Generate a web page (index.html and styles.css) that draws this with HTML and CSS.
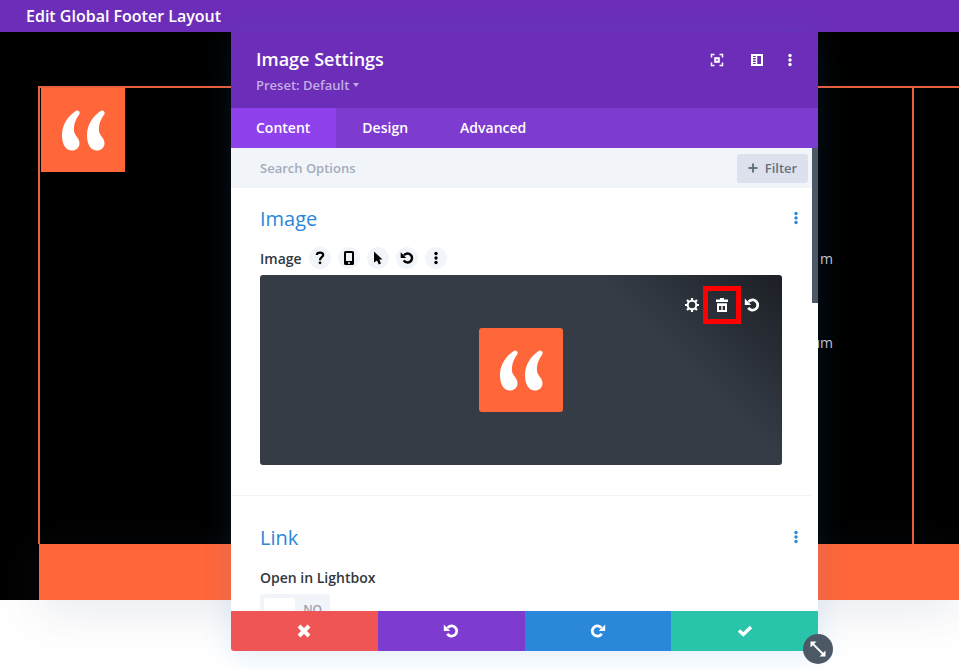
FILE: index.html
```html
<!DOCTYPE html>
<html lang="en">
<head>
  <meta charset="UTF-8" />
  <meta name="viewport" content="width=device-width, initial-scale=1.0"/>
  <title>Edit Global Footer Layout</title>
  <link rel="stylesheet" href="styles.css">
</head>

<body>
  <!-- shared icons -->
  <svg class="sprite" aria-hidden="true">
    <symbol id="quote" viewBox="0 0 84 84">
      <path fill="#fff" d="M34 23.500C36 21.500 39.500 23 38.500 26C35 31 32.500 36 33 43C33.500 48 39 50 38.500 56C38 60 35 62.500 31 62.500C25 62.500 21 57 21 47C21 37 27 28 34 23.500Z"/>
      <path fill="#fff" d="M59 23.500C61 21.500 64.500 23 63.500 26C60 31 57.500 36 58 43C58.500 48 64 50 63.500 56C63 60 60 62.500 56 62.500C50 62.500 46 57 46 47C46 37 52 28 59 23.500Z"/>
    </symbol>
    <symbol id="undo" viewBox="0 0 16 16">
      <path fill="none" stroke="currentColor" stroke-width="2.800" d="M4.600 4.900A5.100 5.100 0 1 1 4.300 10.700"/>
      <path fill="currentColor" d="M0.800 1.500V7.900H7.200Z"/>
    </symbol>
    <symbol id="dots" viewBox="0 0 16 16">
      <g fill="currentColor"><circle cx="8" cy="3.500" r="1.700"/><circle cx="8" cy="8" r="1.700"/><circle cx="8" cy="12.500" r="1.700"/></g>
    </symbol>
  </svg>

  <header class="topbar">
    <h1>Edit Global Footer Layout</h1>
  </header>

  <main class="canvas">
    <div class="footer-grid">
      <div class="col col-logo">
        <svg class="logo"><use href="#quote"/></svg>
      </div>
      <div class="col-text">
        <p>m</p>
        <p>um</p>
      </div>
      <div class="col"></div>
    </div>
    <div class="footer-band"></div>
  </main>

  <section class="modal" aria-label="Image Settings">
    <div class="modal-header">
      <div>
        <h2>Image Settings</h2>
        <button type="button" class="preset">Preset: Default <span class="caret"></span></button>
      </div>
      <div class="modal-tools">
        <button type="button" aria-label="Expand">
          <svg class="icon" viewBox="0 0 16 16"><path fill="none" stroke="currentColor" stroke-width="1.500" d="M2.500 5.500V2.500H5.500M10.500 2.500H13.500V5.500M13.500 10.500V13.500H10.500M5.500 13.500H2.500V10.500"/><rect x="6.200" y="6.200" width="3.600" height="3.600" fill="none" stroke="currentColor" stroke-width="2"/></svg>
        </button>
        <button type="button" aria-label="Snap to side">
          <svg class="icon" viewBox="0 0 16 16"><rect x="3" y="3" width="10" height="10" fill="none" stroke="currentColor" stroke-width="2"/><path fill="none" stroke="currentColor" stroke-width="1.500" d="M7.500 3V13"/><path fill="none" stroke="currentColor" stroke-width="1.200" d="M4 5.500H7M4 8H7M4 10.500H7"/></svg>
        </button>
        <button type="button" class="narrow" aria-label="More"><svg class="icon"><use href="#dots"/></svg></button>
      </div>
    </div>

    <div class="tabs">
      <button type="button" class="active">Content</button>
      <button type="button">Design</button>
      <button type="button">Advanced</button>
    </div>

    <div class="modal-body">
      <div class="options">
        <div class="search">
          <input type="text" placeholder="Search Options" aria-label="Search Options">
          <button type="button" class="filter">
            <svg viewBox="0 0 10 10"><path stroke="currentColor" stroke-width="2" d="M5 0.500V9.500M0.500 5H9.500"/></svg>
            Filter
          </button>
        </div>

        <div class="group">
          <div class="group-title">
            <h3>Image</h3>
            <button type="button" aria-label="Image options"><svg class="icon"><use href="#dots"/></svg></button>
          </div>
          <div class="field-label">
            <span>Image</span>
            <button type="button" aria-label="Help">
              <svg class="icon" viewBox="0 0 16 16"><path fill="none" stroke="currentColor" stroke-width="2.200" d="M4.800 5C5 1.800 11.200 1.800 11.200 5C11.200 7.300 8 7.200 8 10.200"/><circle cx="8" cy="12.800" r="1.400" fill="currentColor"/></svg>
            </button>
            <button type="button" aria-label="Responsive">
              <svg class="icon" viewBox="0 0 16 16"><path fill="currentColor" fill-rule="evenodd" d="M4.500 1H11.500A1.500 1.500 0 0 1 13 2.500V13.500A1.500 1.500 0 0 1 11.500 15H4.500A1.500 1.500 0 0 1 3 13.500V2.500A1.500 1.500 0 0 1 4.500 1ZM5 3V11H11V3ZM7 12.200V13.800H9V12.200Z"/></svg>
            </button>
            <button type="button" aria-label="Hover">
              <svg class="icon" viewBox="0 0 16 16"><path fill="currentColor" d="M4 1.500L12.500 9.500H9.300L11 13.500L8.800 14.500L7 10.500L4 12.500Z"/></svg>
            </button>
            <button type="button" aria-label="Reset"><svg class="icon small"><use href="#undo"/></svg></button>
            <button type="button" aria-label="More"><svg class="icon"><use href="#dots"/></svg></button>
          </div>
          <div class="preview">
            <svg class="logo"><use href="#quote"/></svg>
            <div class="preview-tools">
              <button type="button" aria-label="Settings">
                <svg class="icon" viewBox="0 0 16 16"><circle cx="8" cy="8" r="4.300" fill="none" stroke="currentColor" stroke-width="2"/><path stroke="currentColor" stroke-width="2.200" d="M8 1V3.500M8 12.500V15M1 8H3.500M12.500 8H15M3 3L4.800 4.800M11.200 11.200L13 13M13 3L11.200 4.800M4.800 11.200L3 13"/></svg>
              </button>
              <button type="button" class="marked" aria-label="Delete">
                <svg class="icon" viewBox="0 0 16 16"><path fill="currentColor" fill-rule="evenodd" d="M6 1H10V2.500H14V5H2V2.500H6ZM3 6.300H13V15H3ZM5 9V13H7.300V9ZM8.700 9V13H11V9Z"/></svg>
              </button>
              <button type="button" aria-label="Reset image"><svg class="icon"><use href="#undo"/></svg></button>
            </div>
          </div>
        </div>

        <div class="group">
          <div class="group-title">
            <h3>Link</h3>
            <button type="button" aria-label="Link options"><svg class="icon"><use href="#dots"/></svg></button>
          </div>
          <label class="field-label" for="lightbox">Open in Lightbox</label>
          <div class="toggle">
            <input type="checkbox" id="lightbox">
            <span>NO</span>
          </div>
        </div>
      </div>
      <div class="scrollbar"><div class="thumb"></div></div>
    </div>

    <div class="actions">
      <button type="button" class="discard" aria-label="Discard">
        <svg class="icon" viewBox="0 0 16 16"><path stroke="currentColor" stroke-width="4" d="M3 3L13 13M13 3L3 13"/></svg>
      </button>
      <button type="button" class="undo" aria-label="Undo"><svg class="icon"><use href="#undo"/></svg></button>
      <button type="button" class="redo" aria-label="Redo"><svg class="icon flip"><use href="#undo"/></svg></button>
      <button type="button" class="save" aria-label="Save">
        <svg class="icon" viewBox="0 0 16 16"><path fill="none" stroke="currentColor" stroke-width="3.400" d="M2 7.500L6.300 11.500L14 4"/></svg>
      </button>
    </div>

    <button type="button" class="resize" aria-label="Resize">
      <svg class="icon" viewBox="0 0 16 16"><path stroke="currentColor" stroke-width="1.800" d="M3 3L13 13"/><path fill="currentColor" d="M0.500 0.500H6.500L0.500 6.500ZM15.500 15.500H9.500L15.500 9.500Z"/></svg>
    </button>
  </section>
</body>
</html>
```

FILE: styles.css
```css
* {
  box-sizing: border-box;
}
body {
  margin: 0;
  min-height: 100vh;
  display: flex;
  flex-direction: column;
  position: relative;
  overflow: hidden;
  background-color: #fff;
  font-family: "Open Sans", sans-serif;
  font-size: 14px;
  color: #32373c;
}
h1, h2, h3, p {
  margin: 0;
}
button {
  display: flex;
  align-items: center;
  justify-content: center;
  padding: 0;
  border: none;
  background: none;
  color: inherit;
  font: inherit;
  cursor: pointer;
}
.sprite {
  display: none;
}
.icon {
  display: block;
  width: 16px;
  height: 16px;
}
.small {
  width: 14px;
  height: 14px;
}
.flip {
  transform: scaleX(-1);
}
.logo {
  display: block;
  width: 84px;
  height: 84px;
  background-color: #ff663a;
}

/* page behind the modal */
.topbar {
  height: 32px;
  padding: 0 26px;
  display: flex;
  align-items: center;
  background-color: #6c2eb9;
  color: #fff;
}
.topbar h1 {
  font-size: 16px;
  font-weight: 600;
}
.canvas {
  flex: 1;
  display: flex;
  flex-direction: column;
  margin-bottom: 69px;
  padding: 54px 0 0 38px;
  background-color: #000;
}
.footer-grid {
  flex: 1;
  display: grid;
  grid-template-columns: 1fr 1fr 47px;
  border-top: 2px solid #e8603c;
}
.col {
  border-left: 2px solid #e8603c;
}
.col-logo {
  padding-left: 1px;
}
.col-text {
  display: flex;
  flex-direction: column;
  align-items: flex-end;
  gap: 64px;
  padding: 161px 79px 0 0;
  line-height: 20px;
  color: #c4c8ce;
}
.footer-band {
  height: 56px;
  margin-left: 1px;
  background-color: #ff663a;
  box-shadow: 0 10px 50px rgba(80, 90, 120, 0.14);
}

/* modal */
.modal {
  position: absolute;
  top: 32px;
  right: 141px;
  bottom: 18px;
  left: 231px;
  display: flex;
  flex-direction: column;
  background-color: #fff;
  border-radius: 3px;
  box-shadow: 0 5px 30px rgba(43, 135, 218, 0.14);
}
.modal-header {
  height: 76px;
  padding: 14px 20px 0 25px;
  display: flex;
  justify-content: space-between;
  background-color: #6c2eb9;
  color: #fff;
}
.modal-header h2 {
  font-size: 18px;
  font-weight: 600;
  line-height: 26px;
}
.preset {
  gap: 4px;
  font-size: 13px;
  font-weight: 600;
  line-height: 26px;
  color: #c4abe3;
}
.caret {
  border: 3px solid transparent;
  border-top: 4px solid #c4abe3;
  border-bottom: none;
}
.modal-tools {
  height: 28px;
  display: flex;
  align-items: center;
  gap: 24px;
}
.modal-tools .narrow {
  margin-left: -7px;
}
.tabs {
  height: 40px;
  display: flex;
  background-color: #7e3bd0;
}
.tabs button {
  padding: 0 26px 2px;
  font-weight: 600;
  color: #fff;
}
.tabs .active {
  padding-left: 25px;
  background-color: #8f42ec;
}
.modal-body {
  flex: 1;
  min-height: 0;
  display: flex;
  overflow: hidden;
}
.options {
  flex: 1;
}
.scrollbar {
  width: 6px;
}
.thumb {
  height: 155px;
  background-color: #4c5866;
}
.search {
  height: 40px;
  padding: 0 4px 0 29px;
  display: flex;
  align-items: center;
  background-color: #f1f5f9;
}
.search input {
  flex: 1;
  min-width: 0;
  padding: 0;
  border: none;
  background: none;
  font: inherit;
  font-size: 13px;
  font-weight: 600;
}
.search input::placeholder {
  color: #a3abba;
}
.filter {
  width: 71px;
  height: 29px;
  gap: 7px;
  border-radius: 3px;
  background-color: #dde1ee;
  font-size: 13px;
  font-weight: 600;
  color: #68717d;
}
.filter svg {
  width: 10px;
  height: 10px;
}
.group {
  padding: 15px 30px 30px 29px;
  border-bottom: 1px solid #f3f4f7;
}
.group + .group {
  padding-top: 26px;
}
.group-title {
  display: flex;
  align-items: center;
  justify-content: space-between;
  margin-right: -22px;
  height: 30px;
  color: #2b87da;
}
.group-title h3 {
  font-size: 20px;
  font-weight: 400;
}
.field-label {
  height: 22px;
  margin: 14px 0 6px;
  display: flex;
  align-items: center;
  gap: 7px;
  font-weight: 600;
}
.field-label button {
  width: 22px;
  height: 22px;
  border-radius: 50%;
  background-color: #f1f5f9;
  color: #000;
}
.preview {
  position: relative;
  height: 190px;
  display: flex;
  align-items: center;
  justify-content: center;
  border-radius: 3px;
  background: linear-gradient(225deg, #1c1f25, #353c46 130px);
}
.preview .logo {
  border-radius: 3px;
}
.preview-tools {
  position: absolute;
  top: 16px;
  right: 16px;
  display: flex;
  gap: 2px;
  color: #fff;
}
.preview-tools button {
  width: 28px;
  height: 28px;
}
.preview-tools .marked {
  outline: 5px solid #f00;
}
.toggle {
  width: 70px;
  height: 30px;
  padding: 0 8px 0 4px;
  display: flex;
  align-items: center;
  justify-content: space-between;
  border-radius: 3px;
  background-color: #f1f5f9;
  font-size: 12px;
  font-weight: 600;
  color: #98a1b2;
}
.toggle input {
  appearance: none;
  width: 31px;
  height: 22px;
  margin: 0;
  border-radius: 3px;
  background-color: #fff;
}
.actions {
  height: 40px;
  display: grid;
  grid-template-columns: repeat(4, 1fr);
  overflow: hidden;
  border-radius: 0 0 3px 3px;
  color: #fff;
}
.discard {
  background-color: #ef5555;
}
.undo {
  background-color: #7e3bd0;
}
.redo {
  background-color: #2b87da;
}
.save {
  background-color: #29c4a9;
}
.resize {
  position: absolute;
  right: -15px;
  bottom: -13px;
  width: 30px;
  height: 30px;
  border-radius: 50%;
  background-color: #4c5866;
  color: #fff;
}
```
